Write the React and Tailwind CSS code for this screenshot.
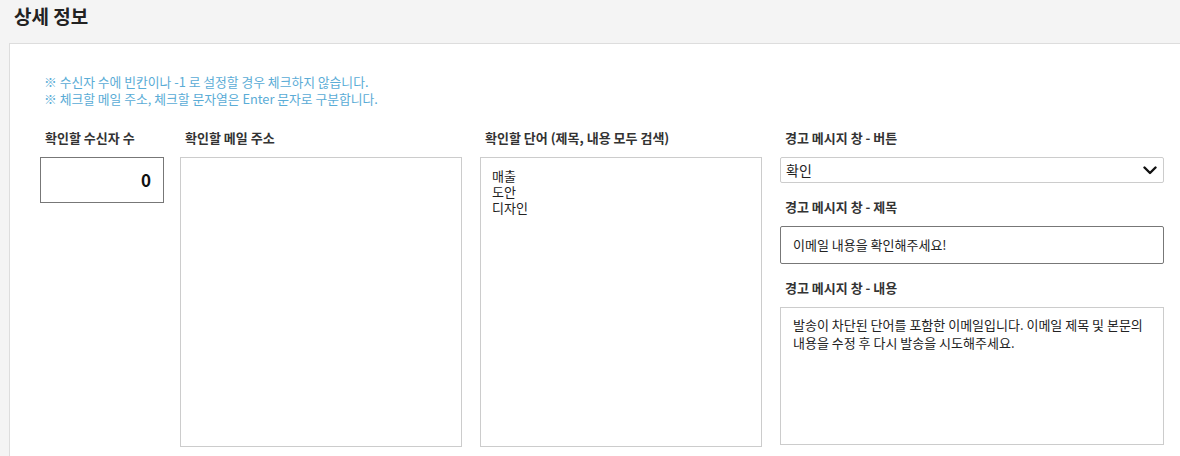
import React from "react";

const font = { fontFamily: '"Noto Sans CJK KR", "Noto Sans", sans-serif' };

function Label({ children, className = "" }) {
  return (
    <div className={`h-4 leading-4 mb-[11px] pl-[5px] text-[13px] font-bold text-[#333] whitespace-nowrap ${className}`}>
      {children}
    </div>
  );
}

export default function App() {
  return (
    <div className="min-h-[456px] bg-[#f4f4f4] flex flex-col overflow-hidden" style={font}>
      <h1 className="h-[43px] pl-[14px] pt-[4px] text-[19px] leading-6 font-bold text-[#222]">상세 정보</h1>
      <div className="ml-[9px] flex-1 bg-white border-t border-l border-[#dddddd] pl-[30px] pt-[29px] pb-4">
        <div className="pl-[4px] text-[12.8px] leading-[17px] text-[#5aacd6]">
          <p>※ 수신자 수에 빈칸이나 -1 로 설정할 경우 체크하지 않습니다.</p>
          <p>※ 체크할 메일 주소, 체크할 문자열은 Enter 문자로 구분합니다.</p>
        </div>
        <div className="mt-[23px] flex">
          <div className="w-[124px]">
            <Label>확인할 수신자 수</Label>
            <div className="h-[46px] border border-[#777] flex items-center justify-end pr-[12px] text-[17px] font-bold text-[#111]">0</div>
          </div>
          <div className="w-[282px] ml-[16px]">
            <Label>확인할 메일 주소</Label>
            <div className="h-[290px] border border-[#cccccc]" />
          </div>
          <div className="w-[282px] ml-[18px]">
            <Label>확인할 단어 (제목, 내용 모두 검색)</Label>
            <div className="h-[290px] border border-[#cccccc] pl-[11px] pt-[10px] text-[13px] leading-4 text-[#222]">
              <div className="h-4">매출</div>
              <div className="h-4">도안</div>
              <div className="h-4">디자인</div>
            </div>
          </div>
          <div className="w-[384px] ml-[18px]">
            <Label>경고 메시지 창 - 버튼</Label>
            <div className="h-[26px] border border-[#cccccc] rounded-[2px] flex items-center justify-between pl-[5px] pr-[6px] text-[14px] text-[#222]">
              <span>확인</span>
              <svg width="14" height="9" viewBox="0 0 14 9" fill="none">
                <path d="M1.5 1.5 L7 7 L12.5 1.5" stroke="#111" strokeWidth="2.4" strokeLinecap="round" strokeLinejoin="round" />
              </svg>
            </div>
            <Label className="mt-4">경고 메시지 창 - 제목</Label>
            <div className="h-[38px] border border-[#777] rounded-[2px] flex items-center pl-[12px] text-[13px] text-[#222]">
              이메일 내용을 확인해주세요!
            </div>
            <Label className="mt-4">경고 메시지 창 - 내용</Label>
            <div className="h-[138px] border border-[#cccccc] pl-[12px] pr-[10px] pt-[8px] text-[13px] leading-[18px] text-[#222]">
              발송이 차단된 단어를 포함한 이메일입니다. 이메일 제목 및 본문의 내용을 수정 후 다시 발송을 시도해주세요.
            </div>
          </div>
        </div>
      </div>
    </div>
  );
}
